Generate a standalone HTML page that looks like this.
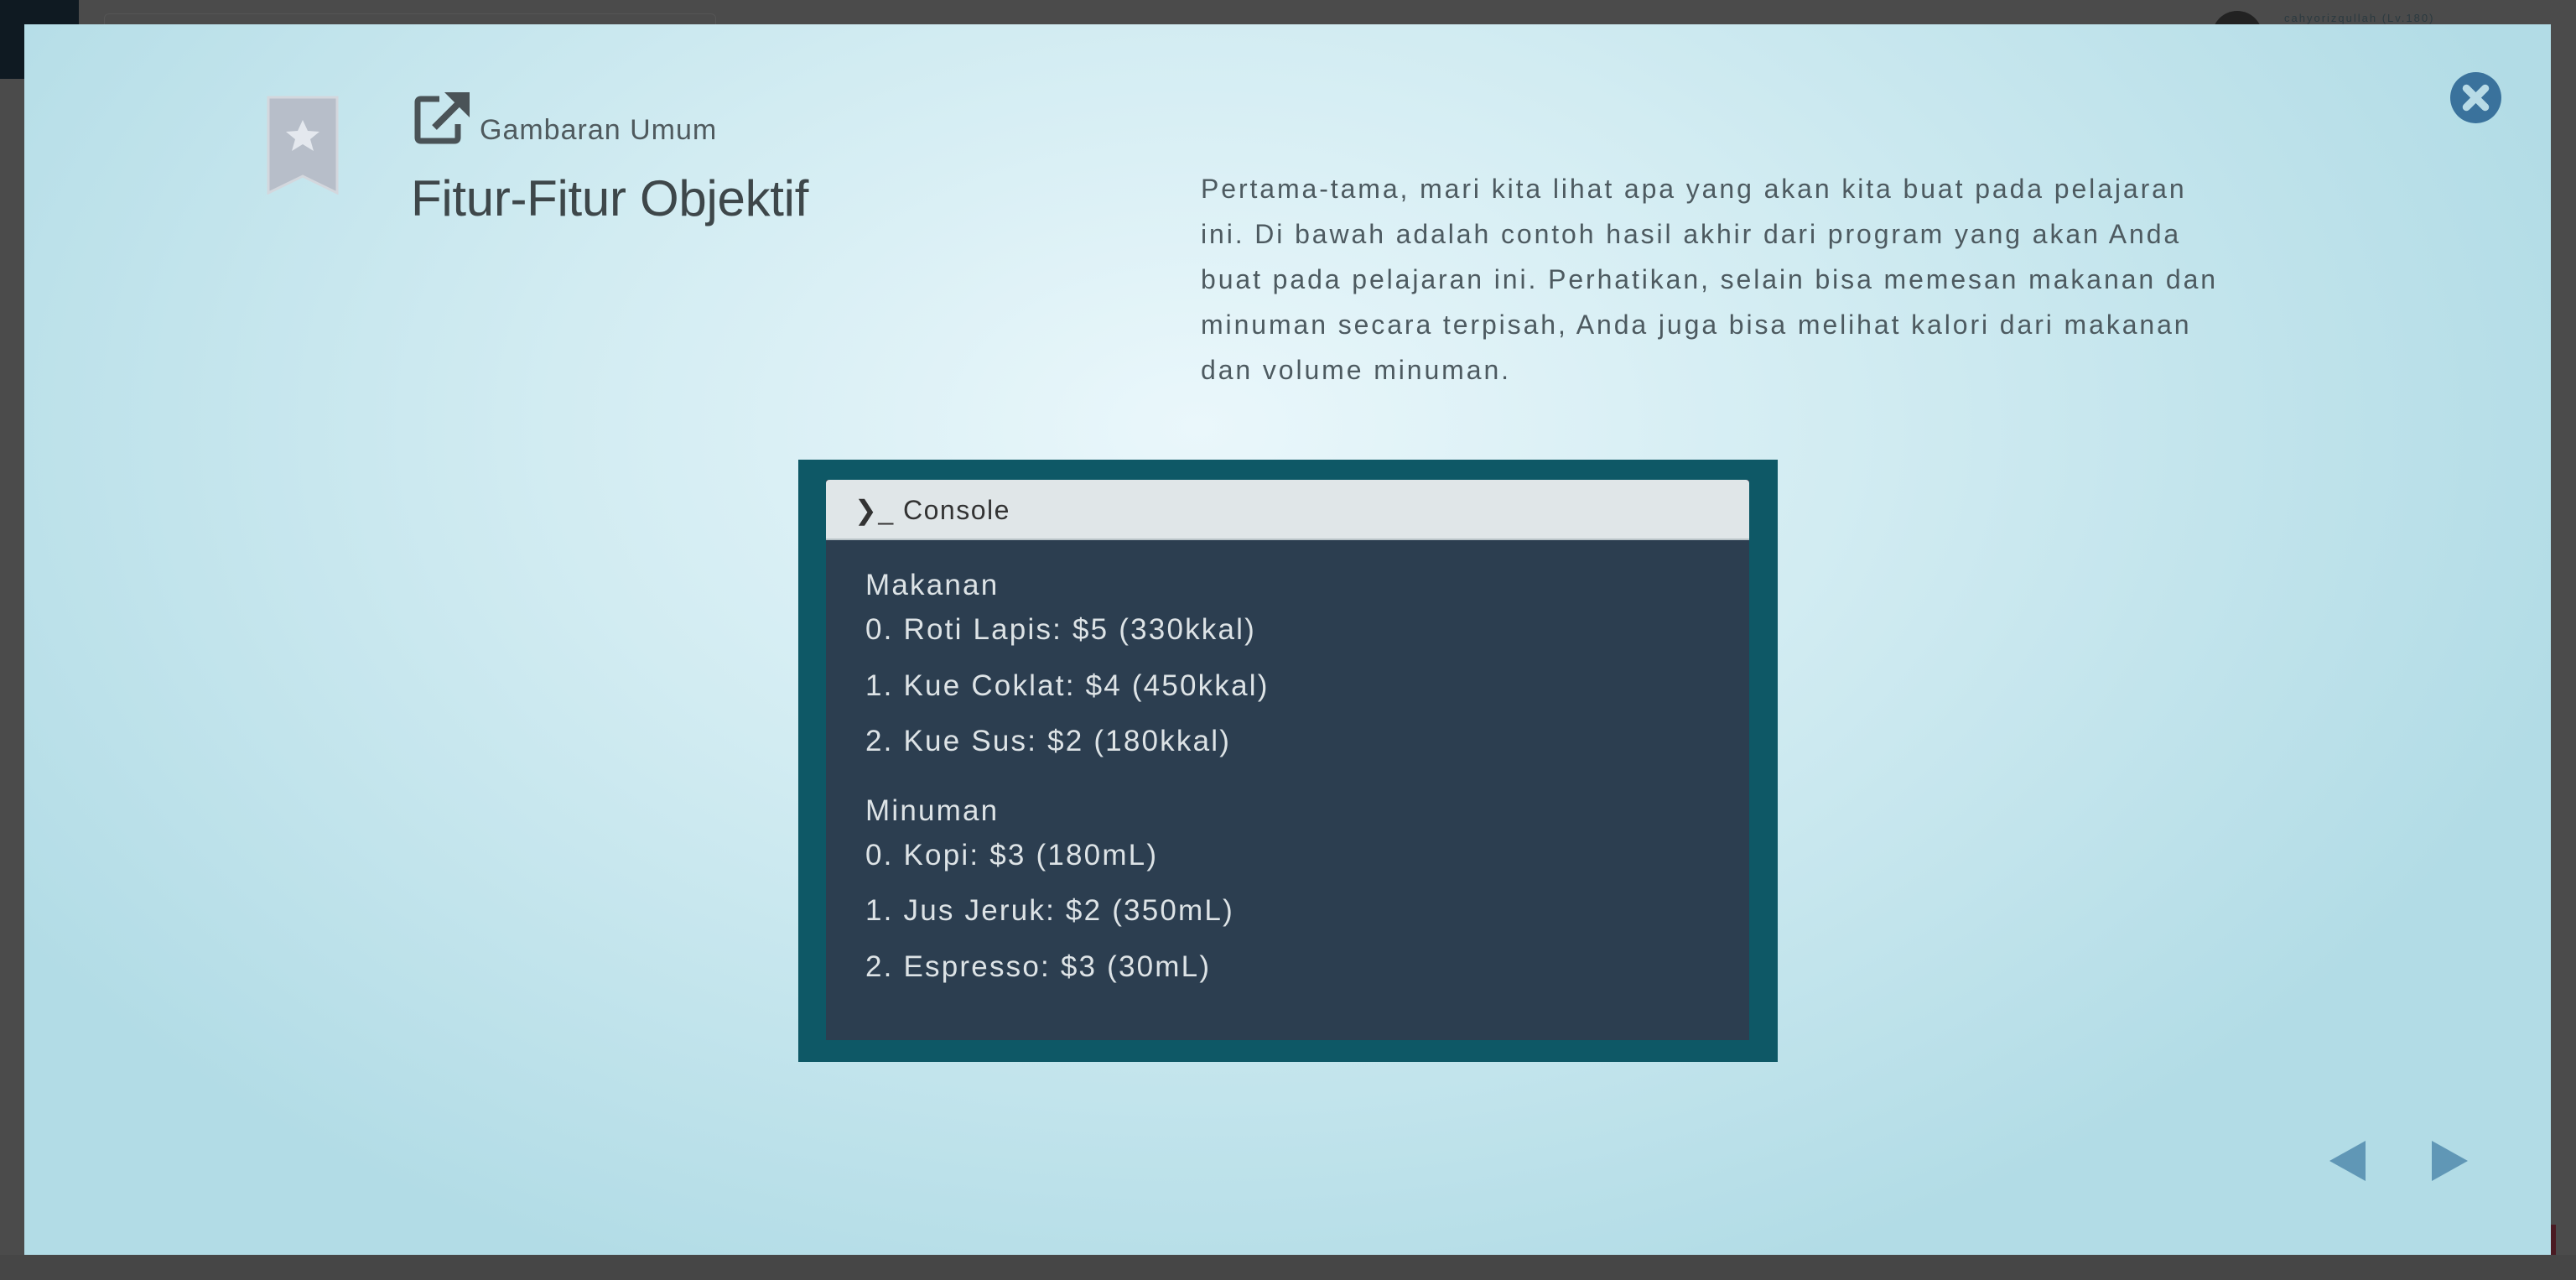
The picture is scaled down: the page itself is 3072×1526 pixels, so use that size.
<!DOCTYPE html>
<html><head><meta charset="utf-8"><style>
*{margin:0;padding:0;box-sizing:border-box}
body{width:3072px;height:1526px;position:relative;overflow:hidden;background:#4b4b4b;font-family:"Liberation Sans",sans-serif}
.abs{position:absolute}
#modal{left:29px;top:29px;width:3013px;height:1467px;background:radial-gradient(ellipse 1700px 1100px at 1400px 480px,#eaf7fb 0%,#d2ecf2 45%,#b2dce6 100%)}
.para{left:1432px;color:#4d5a60;font-size:32px;letter-spacing:2.9px;white-space:nowrap;line-height:54px;top:198px}
.con{left:952px;top:548px;width:1168px;height:718px;background:#0e5866}
.inner{left:33px;top:24px;width:1101px;height:668px;background:#2c3e50}
.hdr{left:0;top:0;width:1101px;height:72px;background:#e0e6e8;border-radius:4px 4px 0 0;border-bottom:2px solid #b9c3c7;color:#333;font-size:32px;letter-spacing:1.5px;line-height:72px;padding-left:34px}
.ln{left:47px;color:#dde3e6;font-size:35px;letter-spacing:2.2px;white-space:nowrap}
</style></head><body>
<div class="abs" style="left:0;top:0;width:94px;height:94px;background:#0f1a22"></div>
<div class="abs" style="left:124px;top:16px;width:730px;height:30px;border:1px solid #555;border-radius:6px"></div>
<div class="abs" style="left:2638px;top:13px;width:60px;height:60px;border-radius:50%;background:#222"></div>
<div class="abs" style="left:2724px;top:14px;color:#2b3a40;font-size:13px;letter-spacing:2px">cahyorizqullah (Lv.180)</div>
<div class="abs" style="left:2808px;top:1460px;width:240px;height:66px;background:#4a1a22"></div>
<div class="abs" style="left:0;top:1496px;width:3072px;height:30px;background:#464646"></div>
<div class="abs" id="modal"></div>
<svg class="abs" style="left:318px;top:114px" width="86" height="118" viewBox="0 0 86 118">
<path d="M2 2H84V116L43 96L2 116Z" fill="#b7bec9" stroke="#d3d7dd" stroke-width="3"/>
<path d="M43 29l6 13 14 1-11 9 4 14-13-8-13 8 4-14-11-9 14-1z" fill="#e4e8ee"/>
</svg>
<svg class="abs" style="left:494px;top:108px" width="68" height="64" viewBox="0 0 68 64">
<path d="M30 10H8Q4 10 4 14V56Q4 60 8 60H48Q52 60 52 56V40" fill="none" stroke="#4a5357" stroke-width="7"/>
<path d="M24 44L56 12" stroke="#4a5357" stroke-width="8"/>
<path d="M36 2H66V32Z" fill="#4a5357"/>
</svg>
<div class="abs" style="left:572px;top:136px;color:#4f5a5e;font-size:34px;letter-spacing:1px">Gambaran Umum</div>
<div class="abs" style="left:490px;top:202px;color:#3e474a;font-size:60px;letter-spacing:-0.3px;font-weight:300">Fitur-Fitur Objektif</div>
<div class="abs para">Pertama-tama, mari kita lihat apa yang akan kita buat pada pelajaran<br>ini. Di bawah adalah contoh hasil akhir dari program yang akan Anda<br>buat pada pelajaran ini. Perhatikan, selain bisa memesan makanan dan<br>minuman secara terpisah, Anda juga bisa melihat kalori dari makanan<br>dan volume minuman.</div>
<svg class="abs" style="left:2922px;top:86px" width="61" height="61" viewBox="0 0 60 60">
<circle cx="30" cy="30" r="30" fill="#3a729c"/>
<path d="M19 19L41 41M41 19L19 41" stroke="#b8dbe6" stroke-width="9" stroke-linecap="round"/>
</svg>
<div class="abs con"><div class="abs inner">
<div class="abs hdr">❯_ Console</div>
<div class="abs ln" style="top:106px">Makanan</div>
<div class="abs ln" style="top:159px">0. Roti Lapis: $5 (330kkal)</div>
<div class="abs ln" style="top:226px">1. Kue Coklat: $4 (450kkal)</div>
<div class="abs ln" style="top:292px">2. Kue Sus: $2 (180kkal)</div>
<div class="abs ln" style="top:375px">Minuman</div>
<div class="abs ln" style="top:428px">0. Kopi: $3 (180mL)</div>
<div class="abs ln" style="top:494px">1. Jus Jeruk: $2 (350mL)</div>
<div class="abs ln" style="top:561px">2. Espresso: $3 (30mL)</div>
</div></div>
<svg class="abs" style="left:2778px;top:1360px" width="166" height="48" viewBox="0 0 166 48">
<path d="M0 24L43 0V48Z" fill="#6097b6"/><path d="M122 0L165 24L122 48Z" fill="#6097b6"/>
</svg>
</body></html>
